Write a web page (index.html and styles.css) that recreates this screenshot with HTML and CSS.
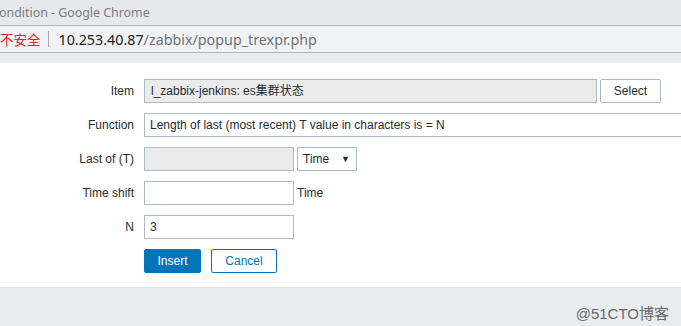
FILE: index.html
```html
<!DOCTYPE html>
<html>
<head>
<meta charset="utf-8">
<link rel="stylesheet" href="styles.css">
</head>
<body>
<div class="titlebar"><span class="title">ondition - Google Chrome</span></div>
<div class="addressbar">
  <span class="insecure">不安全</span><span class="sep"></span><span class="host">10.253.40.87</span><span class="path">/zabbix/popup_trexpr.php</span>
</div>
<div class="strip"></div>
<main class="content">
  <div class="form">
    <label class="lbl">Item</label>
    <div class="field">
      <div class="input disabled w-item">l_zabbix-jenkins: es集群状态</div>
      <button class="btn btn-grey w-select">Select</button>
    </div>
    <label class="lbl">Function</label>
    <div class="field">
      <div class="input w-func">Length of last (most recent) T value in characters is = N</div>
    </div>
    <label class="lbl">Last of (T)</label>
    <div class="field">
      <div class="input disabled w-short"></div>
      <div class="select">Time<span class="arrow">▼</span></div>
    </div>
    <label class="lbl">Time shift</label>
    <div class="field">
      <div class="input w-short"></div>
      <span class="unit">Time</span>
    </div>
    <label class="lbl">N</label>
    <div class="field">
      <div class="input w-short">3</div>
    </div>
    <span></span>
    <div class="field buttons">
      <button class="btn btn-primary w-insert">Insert</button>
      <button class="btn btn-alt w-cancel">Cancel</button>
    </div>
  </div>
</main>
<footer class="footer"><span class="watermark">@51CTO博客</span></footer>
</body>
</html>
```
FILE: styles.css
```css
* { box-sizing: border-box; }
html, body { margin: 0; padding: 0; }
body {
  width: 681px;
  height: 326px;
  overflow: hidden;
  background: #e9ecef;
  font-family: "Liberation Sans", Arial, sans-serif;
  font-size: 12px;
  color: #1f2c33;
}
.titlebar {
  height: 26px;
  background: #e6e9ec;
  border-bottom: 1px solid #b4b6b8;
  display: flex;
  align-items: center;
}
.title {
  font-family: "Noto Sans", "Open Sans", sans-serif;
  font-size: 12.4px;
  color: #7a7d80;
  margin-left: -1px;
  padding-bottom: 1px;
}
.addressbar {
  height: 27px;
  background: #f1f2f4;
  border-bottom: 1px solid #b4b6b8;
  display: flex;
  align-items: center;
  font-family: "Noto Sans", "Open Sans", sans-serif;
  font-size: 14.3px;
  white-space: nowrap;
}
.insecure {
  font-family: "Noto Sans CJK SC", sans-serif;
  font-size: 13.5px;
  color: #e0261f;
}
.sep {
  display: inline-block;
  width: 1px;
  height: 16px;
  background: #a8a8a8;
  margin: 0 10px 0 7px;
}
.host { color: #202124; }
.path { color: #6e7276; }
.strip { height: 10px; background: #e9ecef; }
.content {
  background: #fff;
  height: 225px;
  padding-top: 16px;
  border-bottom: 1px solid #dfe3e6;
}
.form {
  display: grid;
  grid-template-columns: 134px 1fr;
  column-gap: 10px;
  row-gap: 10px;
  align-items: center;
}
.lbl {
  text-align: right;
  line-height: 24px;
  color: #1f2c33;
}
.field {
  display: flex;
  align-items: center;
  gap: 3px;
  height: 24px;
  white-space: nowrap;
}
.input {
  height: 24px;
  border: 1px solid #acbbc2;
  background: #fff;
  padding: 0 5px;
  line-height: 22px;
  overflow: hidden;
  font-family: "Liberation Sans", "Noto Sans CJK SC", sans-serif;
}
.input.disabled { background: #ebebeb; }
.w-item { width: 453px; padding-left: 6px; }
.w-func { width: 560px; }
.w-short { width: 150px; }
.select {
  width: 60px;
  height: 24px;
  border: 1px solid #acbbc2;
  background: #fff;
  padding: 0 6px 0 5px;
  line-height: 22px;
  display: flex;
  justify-content: space-between;
}
.arrow { font-size: 9px; }
.btn {
  height: 24px;
  font-family: "Liberation Sans", Arial, sans-serif;
  font-size: 12px;
  border-radius: 2px;
  padding: 0;
  cursor: pointer;
}
.btn-grey {
  background: #fff;
  border: 1px solid #acbbc2;
  color: #1f2c33;
}
.btn-primary {
  background: #0275b8;
  border: 1px solid #0275b8;
  color: #fff;
}
.btn-alt {
  background: #fff;
  border: 1px solid #0275b8;
  color: #0275b8;
}
.w-select { width: 61px; }
.w-insert { width: 57px; }
.w-cancel { width: 66px; }
.buttons { gap: 10px; }
.footer {
  height: 38px;
  background: #e9ecef;
  display: flex;
  justify-content: flex-end;
  align-items: center;
  padding-right: 12px;
}
.watermark {
  font-family: "Liberation Sans", "Noto Sans CJK SC", sans-serif;
  font-size: 15px;
  color: #6a6a6a;
  padding-top: 10px;
}
```
